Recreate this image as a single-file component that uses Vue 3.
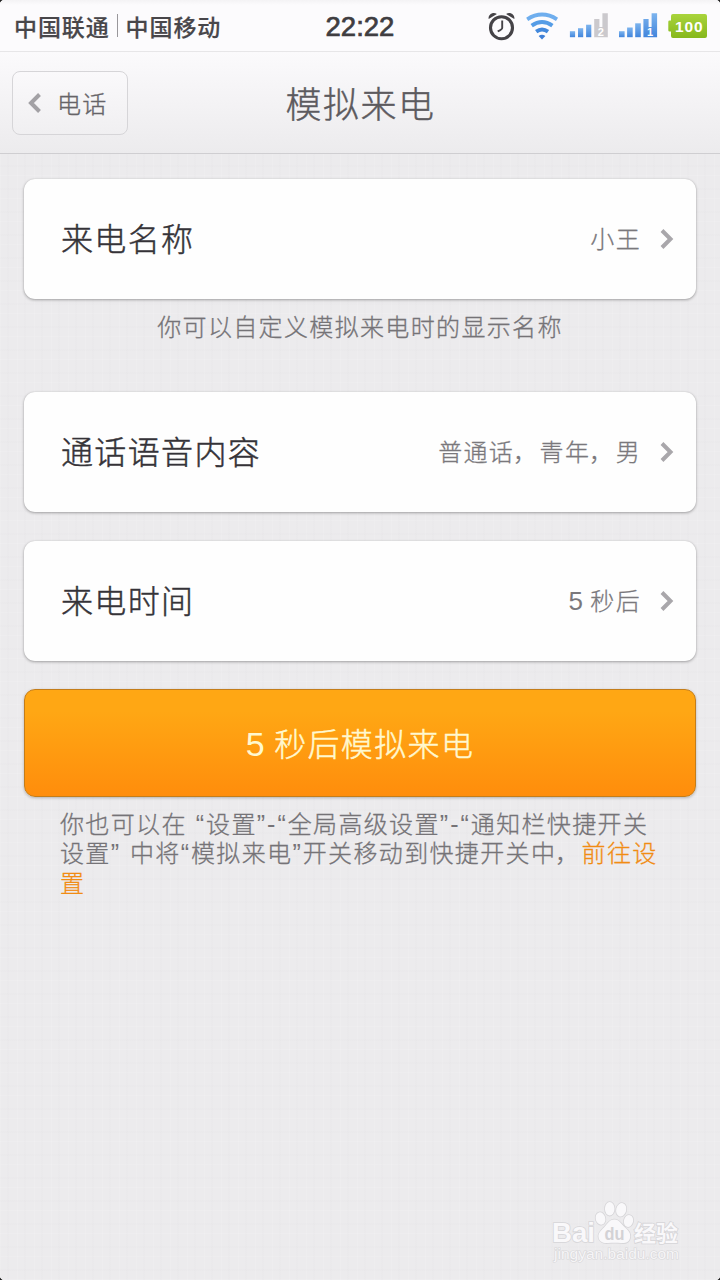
<script setup>
const bars = [6, 8.5, 11.5]
</script>

<template>
  <main class="screen">
    <header class="status">
      <div class="carriers"><span>中国联通</span><i></i><span>中国移动</span></div>
      <div class="clock">22:22</div>
      <div class="icons">
        <svg width="232" height="40" viewBox="488 6 232 40">
          <defs>
            <linearGradient id="blue" x1="0" y1="0" x2="0" y2="1">
              <stop offset="0" stop-color="#7db4ee" /><stop offset="1" stop-color="#4285dc" />
            </linearGradient>
            <linearGradient id="green" x1="0" y1="0" x2="0" y2="1">
              <stop offset="0" stop-color="#a9d43c" /><stop offset="1" stop-color="#86b81c" />
            </linearGradient>
          </defs>
          <circle cx="501.500" cy="27.700" r="11" fill="none" stroke="#454347" stroke-width="3.100" />
          <path d="M502.200 20.500v7.500q0 1.500-4.500 3.300" fill="none" stroke="#454347" stroke-width="1.900" />
          <path d="M488.700 19c-1-4.400 4.400-7.800 8.200-5zM514.300 19c1-4.400-4.400-7.800-8.200-5z" fill="#454347" />
          <g fill="none" stroke="#559ce6" stroke-width="3.900">
            <path d="M527.200 19.300Q542 9.900 557 19.300" stroke="#6faeee" />
            <path d="M531.700 25.600Q542 18.200 552.400 25.600" />
            <path d="M536.200 31.600Q542 27.300 548 31.600" stroke="#4288dc" />
          </g>
          <path d="M538.600 36.100q3.400-2.500 6.800 0l-3.400 3.400z" fill="#3f7fd6" />
          <g fill="url(#blue)">
            <rect v-for="(h, i) in bars" :key="'a' + i" :x="569.900 + i * 8.100" :y="37.200 - h - i * .5" width="5.200" :height="h + i * .5" />
            <rect v-for="(h, i) in bars" :key="'b' + i" :x="619 + i * 8.100" :y="37.200 - h - i * 1.200" width="5.600" :height="h + i * 1.200" />
            <path d="M643.400 37.200V19h5.200v8h3V13.300h5.500v23.900z" />
          </g>
          <path d="M594.200 37.200V19h5.200v8h3V13.300h5.400v23.900z" fill="#cbc9cd" />
          <text x="597.700" y="36.200" class="sim">2</text>
          <text x="646.900" y="36.200" class="sim">1</text>
          <path d="M673 14h32q2 0 2 2v20q0 2-2 2h-32q-2 0-2-2v-4.500h-1.400q-1.300 0-1.300-1.300v-8.400q0-1.300 1.300-1.300h1.400V16q0-2 2-2z" fill="url(#green)" />
          <text x="689.200" y="31.900" text-anchor="middle" class="battery">100</text>
        </svg>
      </div>
    </header>

    <nav class="nav">
      <button class="back">
        <svg width="14" height="20" viewBox="0 0 14 20"><path d="M11.500 1.500 3 10l8.500 8.500" fill="none" stroke="#a3a1a5" stroke-width="4" /></svg>
        <span>电话</span>
      </button>
      <h1>模拟来电</h1>
    </nav>

    <section class="content">
      <div class="card">
        <span class="label">来电名称</span><span class="value">小王</span>
        <svg class="chev" width="14" height="20" viewBox="0 0 14 20"><path d="M2 1.500 10.500 10 2 18.500" /></svg>
      </div>
      <p class="hint">你可以自定义模拟来电时的显示名称</p>
      <div class="card second">
        <span class="label">通话语音内容</span><span class="value">普通话<b class="comma">，</b>青年<b class="comma">，</b>男</span>
        <svg class="chev" width="14" height="20" viewBox="0 0 14 20"><path d="M2 1.500 10.500 10 2 18.500" /></svg>
      </div>
      <div class="card third">
        <span class="label">来电时间</span><span class="value"><b class="five">5 </b>秒后</span>
        <svg class="chev" width="14" height="20" viewBox="0 0 14 20"><path d="M2 1.500 10.500 10 2 18.500" /></svg>
      </div>
      <button class="primary"><b>5 </b>秒后模拟来电</button>
      <p class="note">
        <span class="line">你也可以在<i> “</i>设置<i>”-“</i>全局高级设置<i>”-“</i>通知栏快捷开关</span>
        <span class="line">设置<i>” </i>中将<i>“</i>模拟来电<i>”</i>开关移动到快捷开关中<b class="comma">，</b><em>前往设</em></span>
        <span class="line"><em>置</em></span>
      </p>
    </section>

    <svg class="watermark" width="140" height="70" viewBox="546 1198 140 70">
      <g class="mark">
        <ellipse cx="600.500" cy="1218.500" rx="4.800" ry="6.200" transform="rotate(-14 600.5 1218.5)" />
        <ellipse cx="609.700" cy="1208.800" rx="4.800" ry="6.800" />
        <ellipse cx="621.200" cy="1209.800" rx="5" ry="6.800" transform="rotate(14 621.2 1209.800)" />
        <ellipse cx="628.500" cy="1221" rx="4.600" ry="6" transform="rotate(14 628.500 1221)" />
        <path d="M614.500 1219.500c5 0 7 5 10.500 8 4 3.500 6 6 5 10.500-1 4.500-5 5.500-9 5-4-.500-9-.500-13 0-5 .500-9-1.500-9.500-6-.500-4 2.500-6.500 5.500-9.500s5-8 10.500-8z" />
        <text x="552" y="1242" class="bai" textLength="43" lengthAdjust="spacingAndGlyphs">Bai</text>
        <text x="634" y="1240.500" class="exp" textLength="44">经验</text>
      </g>
      <text x="604.500" y="1240" class="du" textLength="20" lengthAdjust="spacingAndGlyphs">du</text>
      <text x="554" y="1259" class="url" textLength="125" lengthAdjust="spacingAndGlyphs">jingyan.baidu.com</text>
    </svg>
    <i class="corner tl"></i><i class="corner tr"></i><i class="corner bl"></i><i class="corner br"></i>
  </main>
</template>

<style>
html, body { margin: 0; background: #ebeaec; }
</style>

<style scoped>
.screen {
  position: relative;
  width: 720px;
  height: 1280px;
  overflow: hidden;
  box-sizing: border-box;
  color: #353338;
  font-family: "Liberation Sans", "Noto Sans CJK SC", sans-serif;
  background-color: #ecebed;
  background-image:
    repeating-linear-gradient(90deg, rgba(255,255,255,.1) 0 1px, transparent 1px 7px, rgba(160,155,165,.02) 7px 9px, transparent 9px 17px),
    repeating-linear-gradient(0deg, rgba(255,255,255,.1) 0 1px, transparent 1px 9px, rgba(160,155,165,.02) 9px 11px, transparent 11px 23px);
}
b, i, em { font-style: normal; font-weight: inherit; }
button { font-family: inherit; margin: 0; }
.status {
  display: grid;
  grid-template-columns: 1fr auto 1fr;
  align-items: center;
  height: 52px;
  box-sizing: border-box;
  border-bottom: 1px solid #e7e6e8;
  background: linear-gradient(#f4f3f5, #fcfbfd 5px);
}
.carriers { display: flex; align-items: center; padding-left: 14px; font-size: 23px; font-weight: 500; letter-spacing: .9px; color: #48464a; white-space: nowrap; -webkit-text-stroke: .2px #48464a; }
.carriers i { width: 1px; height: 23px; background: #99979b; margin: 0 8px 0 7px; }
.clock { font-size: 27.500px; color: #3f3d41; -webkit-text-stroke: .7px #3f3d41; padding-top: 3px; }
.icons { display: flex; justify-content: flex-end; padding-top: 1px; }
.icons svg { display: block; }
.sim { font: bold 11px "Liberation Sans", sans-serif; fill: #fff; }
.battery { font: bold 15.500px "Liberation Sans", sans-serif; fill: #fff; letter-spacing: .8px; }
.nav {
  display: flex;
  align-items: center;
  height: 102px;
  box-sizing: border-box;
  padding: 0 12px;
  background: linear-gradient(#fbfafc, #ecebed);
  border-bottom: 1px solid #cfced1;
}
.back {
  display: flex;
  align-items: center;
  width: 116px;
  height: 64px;
  padding: 0 0 0 15px;
  gap: 15px;
  border: 1.500px solid #d6d5d8;
  border-radius: 8px;
  background: linear-gradient(#faf9fb, #f0eff1);
  color: #666468;
  font-size: 24px;
  font-weight: 300;
  -webkit-text-stroke: .35px;
  letter-spacing: 1.200px;
  white-space: nowrap;
}
.back svg { flex: none; }
.back span { padding-bottom: 1px; }
h1 { flex: 1; margin: 0 116px 2px 0; text-align: center; font-size: 36px; font-weight: 300; letter-spacing: 1.500px; color: #5c5a5e; padding-left: 1px; -webkit-text-stroke: .4px; }
.content { padding: 25px 24px 0; }
.card {
  display: flex;
  align-items: center;
  height: 120px;
  box-sizing: border-box;
  padding: 0 22px 0 37px;
  background: #fefefe;
  border-radius: 11px;
  box-shadow: 0 1px 3px rgba(0,0,0,.32), 0 0 1px rgba(0,0,0,.15);
}
.label { font-size: 32px; letter-spacing: 1.350px; font-weight: 300; -webkit-text-stroke: .45px; padding-bottom: 4px; }
.value { margin-left: auto; font-size: 24px; letter-spacing: 1.350px; font-weight: 300; color: #7a787c; -webkit-text-stroke: .3px; padding-bottom: 4px; }
.comma { margin: 0 1.300px 0 -1.300px; }
.five { font-size: 26px; letter-spacing: 0; -webkit-text-stroke: 0; }
.chev { margin-left: 20px; fill: none; stroke: #a9a7ab; stroke-width: 4; }
.value { margin-right: -1px; }
.hint { margin: 11px 0 0; height: 36px; line-height: 36px; text-align: center; font-size: 24px; letter-spacing: 1.350px; font-weight: 300; color: #757377; -webkit-text-stroke: .3px; }
.second { margin-top: 46px; }
.third { margin-top: 29px; }
.primary {
  display: block;
  width: 672px;
  height: 108px;
  margin-top: 28px;
  padding: 0 0 2px;
  border: 1.500px solid #c47d1a;
  border-radius: 11px;
  background: linear-gradient(#ffa714, #ffa714 20%, #ff8d0c);
  box-shadow: 0 1px 3px rgba(0,0,0,.25);
  color: #fff8cf;
  font-size: 32px;
  letter-spacing: 1.350px;
  font-weight: 300;
  -webkit-text-stroke: .45px;
}
.primary b { font-size: 34px; letter-spacing: 0; -webkit-text-stroke: 0; }
.note { margin: 13px 0 0; padding-left: 36px; font-size: 24px; letter-spacing: 1.350px; font-weight: 300; color: #757377; -webkit-text-stroke: .3px; }
.line { display: block; height: 29.300px; line-height: 29.300px; white-space: nowrap; }
.note i { font-size: 25px; letter-spacing: 2px; -webkit-text-stroke: 0; }
.note em { color: #f18c13; }
.watermark { position: absolute; left: 546px; top: 1198px; }
.mark { fill: #f9f8fa; stroke: #d6d5d8; stroke-width: 1.600px; paint-order: stroke; }
.bai { font: bold 28px "Liberation Sans", sans-serif; }
.exp { font: bold 22px "Noto Sans CJK SC", sans-serif; }
.du { font: bold 18px "Liberation Sans", sans-serif; fill: #d3d2d5; }
.url { font: 14px "Liberation Sans", sans-serif; fill: #f6f5f7; stroke: #d8d7d9; stroke-width: 1.200px; paint-order: stroke; }
.corner { position: absolute; width: 3px; height: 3px; }
.tl { left: 0; top: 0; background: radial-gradient(circle at 100% 100%, transparent 2.500px, #222 3px); }
.tr { right: 0; top: 0; background: radial-gradient(circle at 0 100%, transparent 2.500px, #222 3px); }
.bl { left: 0; bottom: 0; background: radial-gradient(circle at 100% 0, transparent 2.500px, #222 3px); }
.br { right: 0; bottom: 0; background: radial-gradient(circle at 0 0, transparent 2.500px, #222 3px); }
</style>
